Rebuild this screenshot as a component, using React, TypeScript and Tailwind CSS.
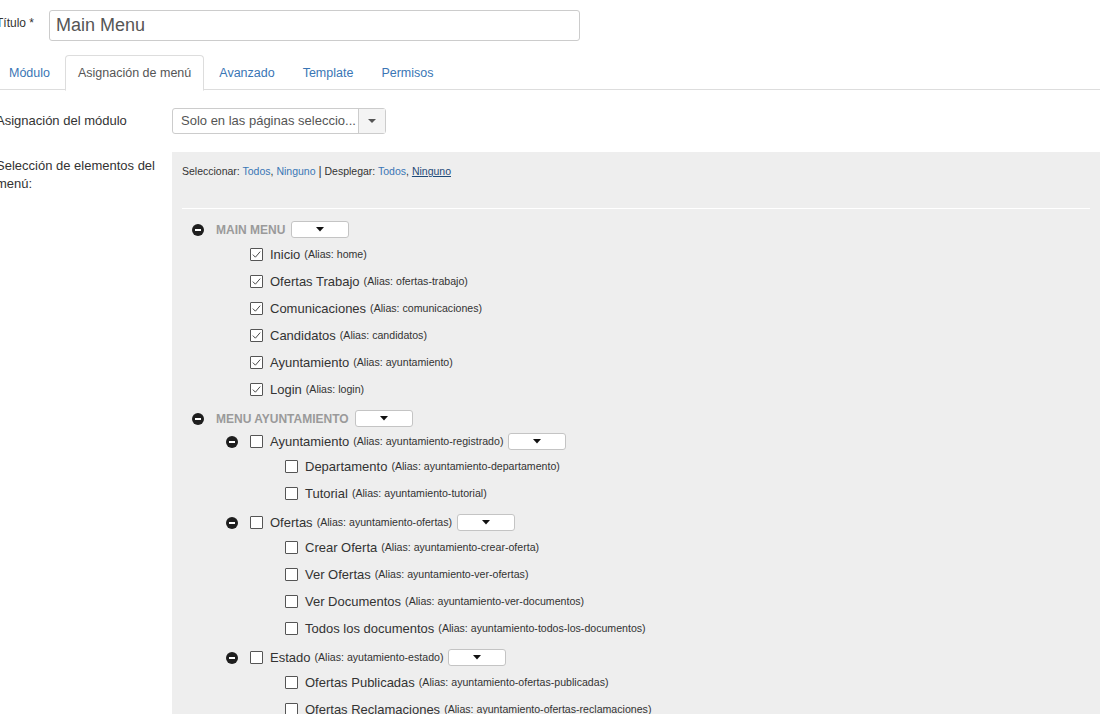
import React from 'react';

type Row = {
  kind: 'root' | 'branch' | 'leaf1' | 'leaf2';
  label: string;
  alias?: string;
  checked?: boolean;
  first?: boolean;
};

const rows: Row[] = [
  { kind: 'root', label: 'MAIN MENU' },
  { kind: 'leaf1', label: 'Inicio', alias: 'home', checked: true },
  { kind: 'leaf1', label: 'Ofertas Trabajo', alias: 'ofertas-trabajo', checked: true },
  { kind: 'leaf1', label: 'Comunicaciones', alias: 'comunicaciones', checked: true },
  { kind: 'leaf1', label: 'Candidatos', alias: 'candidatos', checked: true },
  { kind: 'leaf1', label: 'Ayuntamiento', alias: 'ayuntamiento', checked: true },
  { kind: 'leaf1', label: 'Login', alias: 'login', checked: true },
  { kind: 'root', label: 'MENU AYUNTAMIENTO' },
  { kind: 'branch', label: 'Ayuntamiento', alias: 'ayuntamiento-registrado', first: true },
  { kind: 'leaf2', label: 'Departamento', alias: 'ayuntamiento-departamento' },
  { kind: 'leaf2', label: 'Tutorial', alias: 'ayuntamiento-tutorial' },
  { kind: 'branch', label: 'Ofertas', alias: 'ayuntamiento-ofertas' },
  { kind: 'leaf2', label: 'Crear Oferta', alias: 'ayuntamiento-crear-oferta' },
  { kind: 'leaf2', label: 'Ver Ofertas', alias: 'ayuntamiento-ver-ofertas' },
  { kind: 'leaf2', label: 'Ver Documentos', alias: 'ayuntamiento-ver-documentos' },
  { kind: 'leaf2', label: 'Todos los documentos', alias: 'ayuntamiento-todos-los-documentos' },
  { kind: 'branch', label: 'Estado', alias: 'ayutamiento-estado' },
  { kind: 'leaf2', label: 'Ofertas Publicadas', alias: 'ayuntamiento-ofertas-publicadas' },
  { kind: 'leaf2', label: 'Ofertas Reclamaciones', alias: 'ayuntamiento-ofertas-reclamaciones' },
];

function Caret() {
  return (
    <svg width="8" height="5" viewBox="0 0 8 5">
      <path d="M0 0 L8 0 L4 4.5 Z" fill="#111" />
    </svg>
  );
}

function Minus() {
  return (
    <span className="w-[12px] h-[12px] rounded-full bg-[#1e1e1e] flex items-center justify-center shrink-0">
      <span className="w-[6px] h-[2px] bg-white"></span>
    </span>
  );
}

function Check({ checked }: { checked?: boolean }) {
  return (
    <span className="w-[13px] h-[13px] border border-[#555] bg-white rounded-[1px] flex items-center justify-center shrink-0">
      {checked && (
        <svg width="11" height="11" viewBox="0 0 11 11">
          <path d="M1.8 5.6 L4.4 8.2 L9.2 2.6" fill="none" stroke="#333" strokeWidth="0.9" />
        </svg>
      )}
    </span>
  );
}

function SmallDrop() {
  return (
    <span className="w-[58px] h-[17px] bg-white border border-[#c4c4c4] rounded-[3px] flex items-center justify-center shrink-0">
      <Caret />
    </span>
  );
}

function TreeRow({ row }: { row: Row }) {
  if (row.kind === 'root') {
    return (
      <div className="flex items-center h-[27px] pl-[10px] mt-[2px] -mb-[2px]">
        <Minus />
        <span className="ml-[12px] text-[12px] font-bold text-[#9a9a9a]">{row.label}</span>
        <span className="ml-[6px]">
          <SmallDrop />
        </span>
      </div>
    );
  }
  if (row.kind === 'branch') {
    return (
      <div
        className={
          row.first
            ? 'flex items-center h-[27px] pl-[44px] -mt-[4px] -mb-[2px]'
            : 'flex items-center h-[27px] pl-[44px] mt-[2px] -mb-[2px]'
        }
      >
        <Minus />
        <span className="ml-[12px]">
          <Check checked={row.checked} />
        </span>
        <span className="ml-[7px] text-[13px] text-[#333]">{row.label}</span>
        <span className="ml-[4px] text-[10.6px] text-[#333]">(Alias: {row.alias})</span>
        <span className="ml-[5px]">
          <SmallDrop />
        </span>
      </div>
    );
  }
  return (
    <div className={row.kind === 'leaf1' ? 'flex items-center h-[27px] pl-[68px]' : 'flex items-center h-[27px] pl-[103px]'}>
      <Check checked={row.checked} />
      <span className="ml-[7px] text-[13px] text-[#333]">{row.label}</span>
      <span className="ml-[4px] text-[10.6px] text-[#333]">(Alias: {row.alias})</span>
    </div>
  );
}

export default function App() {
  return (
    <div className="bg-white h-[714px] overflow-hidden" style={{ fontFamily: '"Liberation Sans", Arial, sans-serif' }}>
      <div className="-ml-[4px] w-[1104px]">
        {/* título */}
        <div className="flex items-start pt-[10px]">
          <label className="w-[53px] pt-[4px] text-[12px] leading-[18px] text-[#333]">Título *</label>
          <div className="w-[531px] h-[31px] border border-[#ccc] rounded-[3px] flex items-center px-[6px] text-[18px] text-[#555]">
            Main Menu
          </div>
        </div>

        {/* pestañas */}
        <div className="flex mt-[14px] border-b border-[#ddd] h-[35px] text-[12.5px]">
          <span className="px-[12px] py-[8px] leading-[18px] text-[#3a76b5] border border-transparent mr-[2px]">Módulo</span>
          <span className="px-[12px] py-[8px] leading-[18px] text-[#555] border border-[#ddd] border-b-white bg-white rounded-t-[4px] mr-[2px] h-[36px]">
            Asignación de menú
          </span>
          <span className="px-[12px] py-[8px] leading-[18px] text-[#3a76b5] border border-transparent mr-[2px]">Avanzado</span>
          <span className="px-[12px] py-[8px] leading-[18px] text-[#3a76b5] border border-transparent mr-[2px]">Template</span>
          <span className="px-[12px] py-[8px] leading-[18px] text-[#3a76b5] border border-transparent mr-[2px]">Permisos</span>
        </div>

        {/* asignación del módulo */}
        <div className="flex items-center mt-[18px]">
          <label className="w-[176px] text-[13px] text-[#333]">Asignación del módulo</label>
          <div className="w-[214px] h-[26px] border border-[#ccc] rounded-[3px] flex items-stretch">
            <span className="flex-1 flex items-center pl-[8px] text-[13px] text-[#555]">Solo en las páginas seleccio...</span>
            <span className="w-[27px] border-l border-[#ccc] bg-[#f4f4f4] flex items-center justify-center">
              <svg width="8" height="5" viewBox="0 0 8 5">
                <path d="M0 0 L8 0 L4 4 Z" fill="#555" />
              </svg>
            </span>
          </div>
        </div>

        {/* selección de elementos */}
        <div className="flex items-start mt-[18px]">
          <label className="w-[176px] pr-[16px] pt-[5px] text-[13px] leading-[18px] text-[#333]">
            Selección de elementos del menú:
          </label>
          <div className="flex-1 bg-[#eeeeee] p-[10px] h-[600px]">
            <div className="text-[10.5px] leading-[18px] text-[#333]">
              Seleccionar: <span className="text-[#3a76b5]">Todos</span>, <span className="text-[#3a76b5]">Ninguno</span>{' '}
              <span className="text-[12px]">|</span> Desplegar: <span className="text-[#3a76b5]">Todos</span>,{' '}
              <span className="text-[#1f4a78] underline">Ninguno</span>
            </div>
            <div className="mt-[28px] border-t border-white"></div>
            <div className="mt-[7px]">
              {rows.map((r, i) => (
                <TreeRow key={i} row={r} />
              ))}
            </div>
          </div>
        </div>
      </div>
    </div>
  );
}
